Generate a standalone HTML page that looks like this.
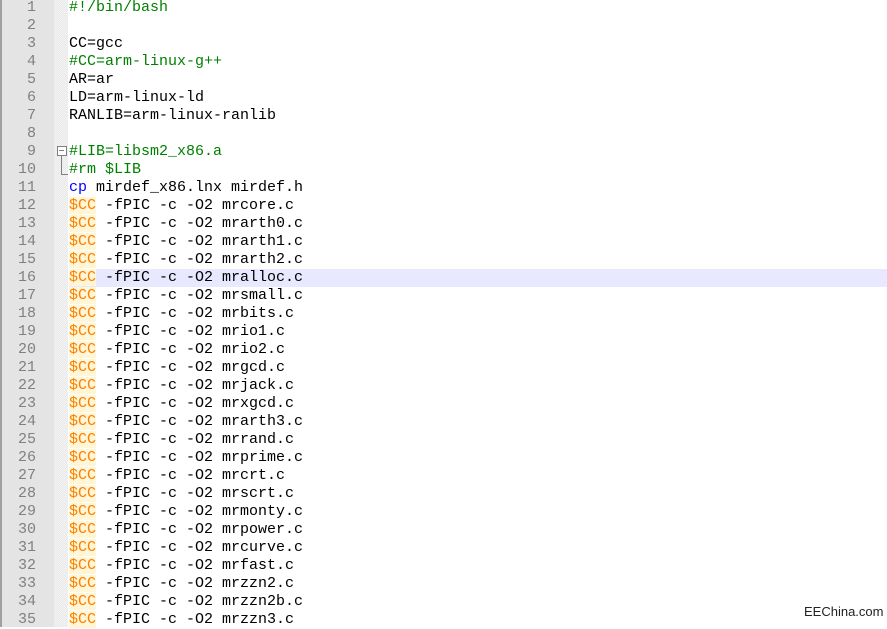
<!DOCTYPE html><html><head><style>
body{margin:0;width:887px;height:627px;overflow:hidden;background:#fff;position:relative;font-family:"Liberation Mono",monospace;}
#bl{position:absolute;left:0;top:0;width:2px;height:627px;background:#a0a0a0}
#g{position:absolute;left:2px;top:0;width:52px;height:627px;background:#e4e4e4}
#f{position:absolute;left:54px;top:0;width:14px;height:627px;background-color:#f4f4f4;background-image:linear-gradient(45deg,#e8e8e8 25%,transparent 25%,transparent 75%,#e8e8e8 75%),linear-gradient(45deg,#e8e8e8 25%,transparent 25%,transparent 75%,#e8e8e8 75%);background-size:2px 2px;background-position:0 0,1px 1px}
.l{position:absolute;left:0;width:887px;height:18px;line-height:18px;font-size:15px;white-space:pre}
.n{position:absolute;left:0;width:36px;text-align:right;color:#808080}
.t{position:absolute;left:69px;color:#000}
.c{color:#008000}.o{color:#ff8000;background:#fef6d6}.b{color:#0000ff}
.hl{position:absolute;left:69px;top:269px;width:818px;height:18px;background:#e8e8ff}
#wm{position:absolute;left:804px;top:604px;font:13px "Liberation Sans",sans-serif;color:#222}
</style></head><body>
<div id="bl"></div><div id="g"></div><div id="f"></div><div class="hl"></div>
<div style="position:absolute;left:57px;top:146px;width:8px;height:8px;border:1px solid #808080;background:#fff"></div>
<div style="position:absolute;left:59px;top:150px;width:5px;height:1px;background:#808080"></div>
<div style="position:absolute;left:61px;top:156px;width:1px;height:18px;background:#808080"></div>
<div style="position:absolute;left:61px;top:174px;width:7px;height:1px;background:#808080"></div>
<div id="lines"></div>
<div id="wm">EEChina.com</div>
<script>
var L=['<span class="c">#!/bin/bash</span>','','CC=gcc','<span class="c">#CC=arm-linux-g++</span>','AR=ar','LD=arm-linux-ld','RANLIB=arm-linux-ranlib','','<span class="c">#LIB=libsm2_x86.a</span>','<span class="c">#rm $LIB</span>','<span class="b">cp</span> mirdef_x86.lnx mirdef.h'];
var f=['mrcore','mrarth0','mrarth1','mrarth2','mralloc','mrsmall','mrbits','mrio1','mrio2','mrgcd','mrjack','mrxgcd','mrarth3','mrrand','mrprime','mrcrt','mrscrt','mrmonty','mrpower','mrcurve','mrfast','mrzzn2','mrzzn2b','mrzzn3'];
f.forEach(function(x){L.push('<span class="o">$CC</span> -fPIC -c -O2 '+x+'.c')});
var h='';L.forEach(function(s,i){h+='<div class="l" style="top:'+(i*18-1)+'px"><span class="n">'+(i+1)+'</span><span class="t">'+s+'</span></div>'});
document.getElementById('lines').innerHTML=h;
</script>
</body></html>
